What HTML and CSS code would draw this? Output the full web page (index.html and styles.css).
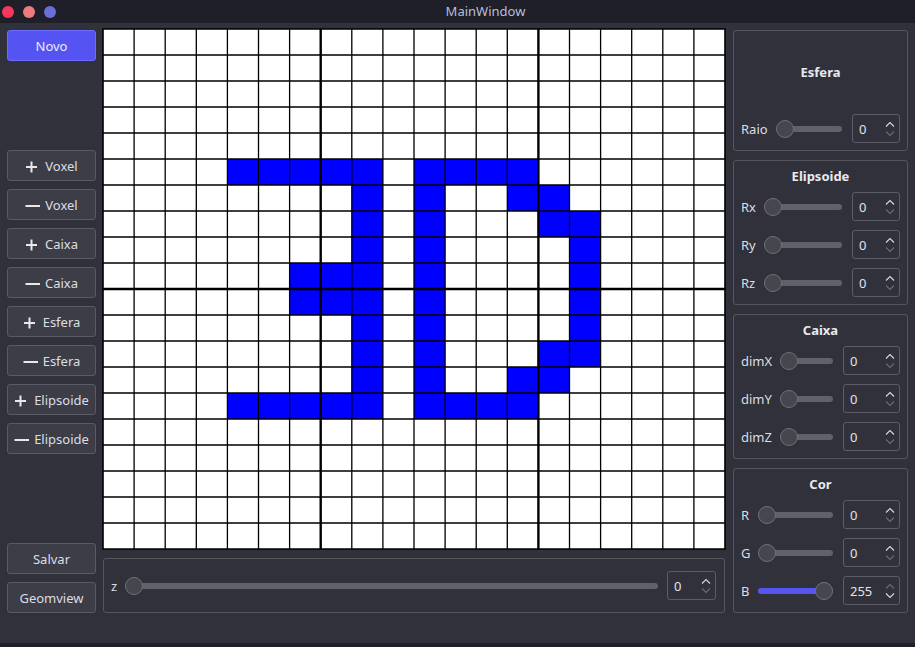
FILE: index.html
```html
<!DOCTYPE html>
<html lang="pt">
<head>
<meta charset="utf-8">
<title>MainWindow</title>
<link rel="stylesheet" href="styles.css">
</head>
<body>
<div class="window">
  <header class="titlebar">
    <div class="lights">
      <span class="light red"></span>
      <span class="light salmon"></span>
      <span class="light blue"></span>
    </div>
    <div class="title">MainWindow</div>
  </header>

  <main class="main">
    <aside class="left">
      <button class="btn primary">Novo</button>
      <div class="btn-group tools">
        <button class="btn"><svg class="ico" viewBox="0 0 16 16"><path d="M1 8H12M6.5 2.5V13.5"/></svg>Voxel</button>
        <button class="btn"><svg class="ico" viewBox="0 0 16 16"><path d="M0.5 8H15"/></svg>Voxel</button>
        <button class="btn"><svg class="ico" viewBox="0 0 16 16"><path d="M1 8H12M6.5 2.5V13.5"/></svg>Caixa</button>
        <button class="btn"><svg class="ico" viewBox="0 0 16 16"><path d="M0.5 8H15"/></svg>Caixa</button>
        <button class="btn"><svg class="ico" viewBox="0 0 16 16"><path d="M1 8H12M6.5 2.5V13.5"/></svg>Esfera</button>
        <button class="btn"><svg class="ico" viewBox="0 0 16 16"><path d="M0.5 8H15"/></svg>Esfera</button>
        <button class="btn"><svg class="ico" viewBox="0 0 16 16"><path d="M1 8H12M6.5 2.5V13.5"/></svg>Elipsoide</button>
        <button class="btn"><svg class="ico" viewBox="0 0 16 16"><path d="M0.5 8H15"/></svg>Elipsoide</button>
      </div>
      <div class="btn-group bottom">
        <button class="btn">Salvar</button>
        <button class="btn">Geomview</button>
      </div>
    </aside>

    <section class="center">
      <svg class="grid" width="622" height="520" viewBox="0 0 20 20" preserveAspectRatio="none">
        <rect class="bg" x="0" y="0" width="20" height="20"/>
        <g class="cells">
          <rect x="4" y="5" width="5" height="1"/>
          <rect x="10" y="5" width="4" height="1"/>
          <rect x="8" y="6" width="1" height="8"/>
          <rect x="10" y="6" width="1" height="8"/>
          <rect x="13" y="6" width="2" height="1"/>
          <rect x="14" y="7" width="2" height="1"/>
          <rect x="15" y="8" width="1" height="4"/>
          <rect x="14" y="12" width="2" height="1"/>
          <rect x="13" y="13" width="2" height="1"/>
          <rect x="6" y="9" width="2" height="2"/>
          <rect x="4" y="14" width="5" height="1"/>
          <rect x="10" y="14" width="4" height="1"/>
        </g>
        <path class="thin" vector-effect="non-scaling-stroke" d="M1 0V20M2 0V20M3 0V20M4 0V20M5 0V20M6 0V20M8 0V20M9 0V20M10 0V20M11 0V20M12 0V20M13 0V20M15 0V20M16 0V20M17 0V20M18 0V20M19 0V20M0 1H20M0 2H20M0 3H20M0 4H20M0 5H20M0 6H20M0 7H20M0 8H20M0 9H20M0 11H20M0 12H20M0 13H20M0 14H20M0 15H20M0 16H20M0 17H20M0 18H20M0 19H20"/>
        <path class="thick" vector-effect="non-scaling-stroke" d="M7 0V20M14 0V20M0 10H20"/>
        <rect class="frame" vector-effect="non-scaling-stroke" x="0" y="0" width="20" height="20"/>
      </svg>

      <div class="zpanel">
        <span class="zlabel">z</span>
        <div class="slider"><div class="groove"></div><div class="handle"></div></div>
        <div class="spin w49">
          <span class="val">0</span>
          <span class="arrows">
            <svg class="chev on" viewBox="0 0 10 6"><path d="M1 5.5L5 1.5L9 5.5"/></svg>
            <svg class="chev" viewBox="0 0 10 6"><path d="M1 0.5L5 4.5L9 0.5"/></svg>
          </span>
        </div>
      </div>
    </section>

    <aside class="right">
      <div class="group esfera">
        <div class="gtitle grow">Esfera</div>
        <div class="rows sw48">
          <span class="lbl">Raio</span>
          <div class="slider"><div class="groove"></div><div class="handle"></div></div>
          <div class="spin"><span class="val">0</span><span class="arrows"><svg class="chev on" viewBox="0 0 10 6"><path d="M1 5.5L5 1.5L9 5.5"/></svg><svg class="chev" viewBox="0 0 10 6"><path d="M1 0.5L5 4.5L9 0.5"/></svg></span></div>
        </div>
      </div>

      <div class="group">
        <div class="gtitle">Elipsoide</div>
        <div class="rows sw48">
          <span class="lbl">Rx</span>
          <div class="slider"><div class="groove"></div><div class="handle"></div></div>
          <div class="spin"><span class="val">0</span><span class="arrows"><svg class="chev on" viewBox="0 0 10 6"><path d="M1 5.5L5 1.5L9 5.5"/></svg><svg class="chev" viewBox="0 0 10 6"><path d="M1 0.5L5 4.5L9 0.5"/></svg></span></div>
          <span class="lbl">Ry</span>
          <div class="slider"><div class="groove"></div><div class="handle"></div></div>
          <div class="spin"><span class="val">0</span><span class="arrows"><svg class="chev on" viewBox="0 0 10 6"><path d="M1 5.5L5 1.5L9 5.5"/></svg><svg class="chev" viewBox="0 0 10 6"><path d="M1 0.5L5 4.5L9 0.5"/></svg></span></div>
          <span class="lbl">Rz</span>
          <div class="slider"><div class="groove"></div><div class="handle"></div></div>
          <div class="spin"><span class="val">0</span><span class="arrows"><svg class="chev on" viewBox="0 0 10 6"><path d="M1 5.5L5 1.5L9 5.5"/></svg><svg class="chev" viewBox="0 0 10 6"><path d="M1 0.5L5 4.5L9 0.5"/></svg></span></div>
        </div>
      </div>

      <div class="group">
        <div class="gtitle">Caixa</div>
        <div class="rows sw57">
          <span class="lbl">dimX</span>
          <div class="slider"><div class="groove"></div><div class="handle"></div></div>
          <div class="spin"><span class="val">0</span><span class="arrows"><svg class="chev on" viewBox="0 0 10 6"><path d="M1 5.5L5 1.5L9 5.5"/></svg><svg class="chev" viewBox="0 0 10 6"><path d="M1 0.5L5 4.5L9 0.5"/></svg></span></div>
          <span class="lbl">dimY</span>
          <div class="slider"><div class="groove"></div><div class="handle"></div></div>
          <div class="spin"><span class="val">0</span><span class="arrows"><svg class="chev on" viewBox="0 0 10 6"><path d="M1 5.5L5 1.5L9 5.5"/></svg><svg class="chev" viewBox="0 0 10 6"><path d="M1 0.5L5 4.5L9 0.5"/></svg></span></div>
          <span class="lbl">dimZ</span>
          <div class="slider"><div class="groove"></div><div class="handle"></div></div>
          <div class="spin"><span class="val">0</span><span class="arrows"><svg class="chev on" viewBox="0 0 10 6"><path d="M1 5.5L5 1.5L9 5.5"/></svg><svg class="chev" viewBox="0 0 10 6"><path d="M1 0.5L5 4.5L9 0.5"/></svg></span></div>
        </div>
      </div>

      <div class="group">
        <div class="gtitle">Cor</div>
        <div class="rows sw57">
          <span class="lbl">R</span>
          <div class="slider"><div class="groove"></div><div class="handle"></div></div>
          <div class="spin"><span class="val">0</span><span class="arrows"><svg class="chev on" viewBox="0 0 10 6"><path d="M1 5.5L5 1.5L9 5.5"/></svg><svg class="chev" viewBox="0 0 10 6"><path d="M1 0.5L5 4.5L9 0.5"/></svg></span></div>
          <span class="lbl">G</span>
          <div class="slider"><div class="groove"></div><div class="handle"></div></div>
          <div class="spin"><span class="val">0</span><span class="arrows"><svg class="chev on" viewBox="0 0 10 6"><path d="M1 5.5L5 1.5L9 5.5"/></svg><svg class="chev" viewBox="0 0 10 6"><path d="M1 0.5L5 4.5L9 0.5"/></svg></span></div>
          <span class="lbl">B</span>
          <div class="slider max"><div class="groove"></div><div class="fill"></div><div class="handle"></div></div>
          <div class="spin"><span class="val">255</span><span class="arrows"><svg class="chev" viewBox="0 0 10 6"><path d="M1 5.5L5 1.5L9 5.5"/></svg><svg class="chev on" viewBox="0 0 10 6"><path d="M1 0.5L5 4.5L9 0.5"/></svg></span></div>
        </div>
      </div>
    </aside>
  </main>
</div>
</body>
</html>
```

FILE: styles.css
```css
* { box-sizing: border-box; }

html, body {
  margin: 0;
  padding: 0;
}

body {
  width: 915px;
  height: 647px;
  overflow: hidden;
  background: #30313a;
  font-family: "Noto Sans", "Open Sans", sans-serif;
  font-size: 13px;
  color: #e1e2e7;
}

.window {
  display: flex;
  flex-direction: column;
  height: 647px;
}

/* title bar */
.titlebar {
  flex: none;
  height: 23px;
  background: #1e1f29;
  display: flex;
  align-items: center;
}

.lights {
  width: 56px;
  display: flex;
  gap: 9px;
  padding-left: 2px;
  margin-top: 1px;
}

.light {
  width: 12px;
  height: 12px;
  border-radius: 50%;
}
.light.red { background: #f6385c; }
.light.salmon { background: #f07b7f; }
.light.blue { background: #6670d6; }

.title {
  flex: 1;
  text-align: center;
  color: #b9bed7;
  font-size: 13px;
  line-height: 23px;
}

/* main area */
.main {
  flex: 1;
  display: flex;
  padding: 6px 7px 30px 7px;
  border-bottom: 4px solid #1e1f29;
}

/* left column */
.left {
  width: 89px;
  flex: none;
  display: flex;
  flex-direction: column;
  padding-top: 1px;
  margin-right: 7px;
}

.btn {
  height: 31px;
  width: 89px;
  margin: 0;
  padding: 0;
  border: 1px solid #595a63;
  border-radius: 3px;
  background: #3c3d46;
  color: #dcdde3;
  font-family: "Noto Sans", "Open Sans", sans-serif;
  font-size: 13px;
  display: flex;
  align-items: center;
  justify-content: center;
  gap: 4px;
}

.btn.primary {
  background: #5554f2;
  border-color: #6c6cff;
  color: #ececff;
}

.ico {
  width: 16px;
  height: 16px;
  flex: none;
  fill: none;
  stroke: #e8e8ec;
  stroke-width: 2;
  margin-top: 2px;
}

.btn-group {
  display: flex;
  flex-direction: column;
  gap: 8px;
}

.btn-group.tools { margin-top: 89px; }
.btn-group.bottom { margin-top: auto; }

/* center column */
.center {
  width: 622px;
  flex: none;
  display: flex;
  flex-direction: column;
  margin-right: 8px;
}

.grid {
  display: block;
  width: 622px;
  height: 520px;
  overflow: visible;
}

.grid .bg { fill: #ffffff; }
.grid .cells rect { fill: #0000ff; }
.grid .thin { stroke: #000; stroke-width: 1.3; fill: none; }
.grid .thick { stroke: #000; stroke-width: 2.4; fill: none; }
.grid .frame { stroke: #000; stroke-width: 1.6; fill: none; }

.zpanel {
  margin-top: 9px;
  height: 55px;
  border: 1px solid #55565e;
  border-radius: 3px;
  display: flex;
  align-items: center;
  padding: 0 8px 0 7px;
}

.zlabel {
  width: 14px;
  color: #dcdde3;
}

.zpanel .slider {
  flex: 1;
  margin-right: 9px;
}

/* slider */
.slider {
  position: relative;
  height: 18px;
}

.groove {
  position: absolute;
  left: 2px;
  right: 0;
  top: 6px;
  height: 6px;
  border-radius: 3px;
  background: #606169;
}

.fill {
  position: absolute;
  left: 0;
  right: 9px;
  top: 6px;
  height: 6px;
  border-radius: 3px;
  background: #5656ee;
}

.handle {
  position: absolute;
  left: 0;
  top: 0;
  width: 18px;
  height: 18px;
  border-radius: 50%;
  background: #45464e;
  border: 1px solid #6f7078;
}

.slider.max .handle {
  left: auto;
  right: 0;
}

/* spin box */
.spin {
  height: 29px;
  border: 1px solid #5c5d66;
  border-radius: 3px;
  display: flex;
  align-items: center;
  padding: 0 4px 0 6px;
}

.spin.w49 { width: 49px; }

.val {
  flex: 1;
  color: #e2e3e8;
}

.arrows {
  display: flex;
  flex-direction: column;
  gap: 4px;
  margin-top: 1px;
}

.chev {
  display: block;
  width: 10px;
  height: 6px;
  fill: none;
  stroke: #6b6c74;
  stroke-width: 1.1;
}

.chev.on { stroke: #d9dade; }

/* right column */
.right {
  width: 175px;
  flex: none;
  display: flex;
  flex-direction: column;
  gap: 9px;
  padding-top: 1px;
}

.group {
  height: 145px;
  border: 1px solid #55565e;
  border-radius: 3px;
  padding: 6px 7px 7px 7px;
  display: flex;
  flex-direction: column;
}

.group.esfera { height: 121px; }

.gtitle {
  text-align: center;
  font-weight: 700;
  font-size: 13px;
  line-height: 18px;
  color: #e8e9ee;
  margin-bottom: 7px;
}

.gtitle.grow {
  flex: 1;
  display: flex;
  align-items: center;
  justify-content: center;
}

.rows {
  display: grid;
  align-items: center;
  row-gap: 9px;
  column-gap: 8px;
}

.rows.sw48 { grid-template-columns: auto 1fr 48px; }
.rows.sw57 { grid-template-columns: auto 1fr 57px; }

.rows .slider { margin-right: 2px; }

.lbl {
  color: #dcdde3;
}
```
